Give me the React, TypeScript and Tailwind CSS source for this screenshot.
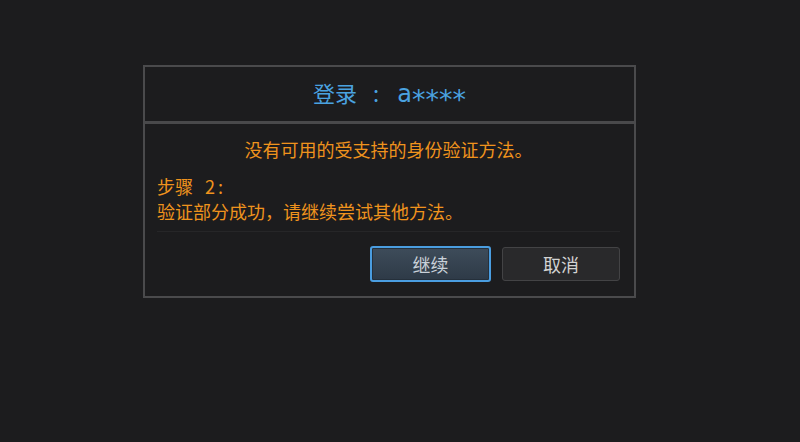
export default function App() {
  const cjk = {
    fontFamily:
      '"Noto Sans CJK SC", "Noto Sans", "Liberation Sans", sans-serif',
  };

  return (
    <div
      className="min-h-[442px] w-full bg-[#1c1c1e] pl-[143px] pt-[65px]"
      style={cjk}
    >
      <div className="w-[493px] border-2 border-[#4a4a4c] bg-[#1c1c1e]">
        {/* header */}
        <div className="flex h-[57px] items-baseline justify-center border-b-[3px] border-[#49494b] pt-[11px] text-[22px] leading-[28px] text-[#4aa2e0]">
          <span>登录</span>
          <span className="ml-[16px]">:</span>
          <span className="ml-[18px] font-['DejaVu_Sans',sans-serif] text-[24px]">
            a<span className="align-[-7px] text-[27px]">****</span>
          </span>
        </div>

        {/* body */}
        <div className="pb-[14px] pl-[12px] pr-[14px] pt-[13px]">
          <p className="text-center text-[18px] leading-[24px] text-[#ef931d]">
            没有可用的受支持的身份验证方法。
          </p>
          <div className="mt-[13px] text-[18px] leading-[25px] text-[#ef931d]">
            <p>
              步骤<span className="ml-[12px]">2</span>
              <span className="ml-[3px]">:</span>
            </p>
            <p>验证部分成功，请继续尝试其他方法。</p>
          </div>
          <div className="mt-[7px] h-px bg-[#262628]" />
          <div className="mt-[14px] flex justify-end gap-[11px]">
            <button className="h-[36px] w-[121px] rounded-[3px] border-2 border-[#4a9de0] bg-gradient-to-b from-[#3e4c5a] to-[#2e3a47] text-[18px] text-[#c9d1d9] shadow-[inset_0_0_0_1px_#25303b]">
              继续
            </button>
            <button className="mt-px h-[34px] w-[118px] rounded-[3px] border border-[#434345] bg-[#29292b] text-[18px] text-[#d2d2d2]">
              取消
            </button>
          </div>
        </div>
      </div>
    </div>
  );
}
